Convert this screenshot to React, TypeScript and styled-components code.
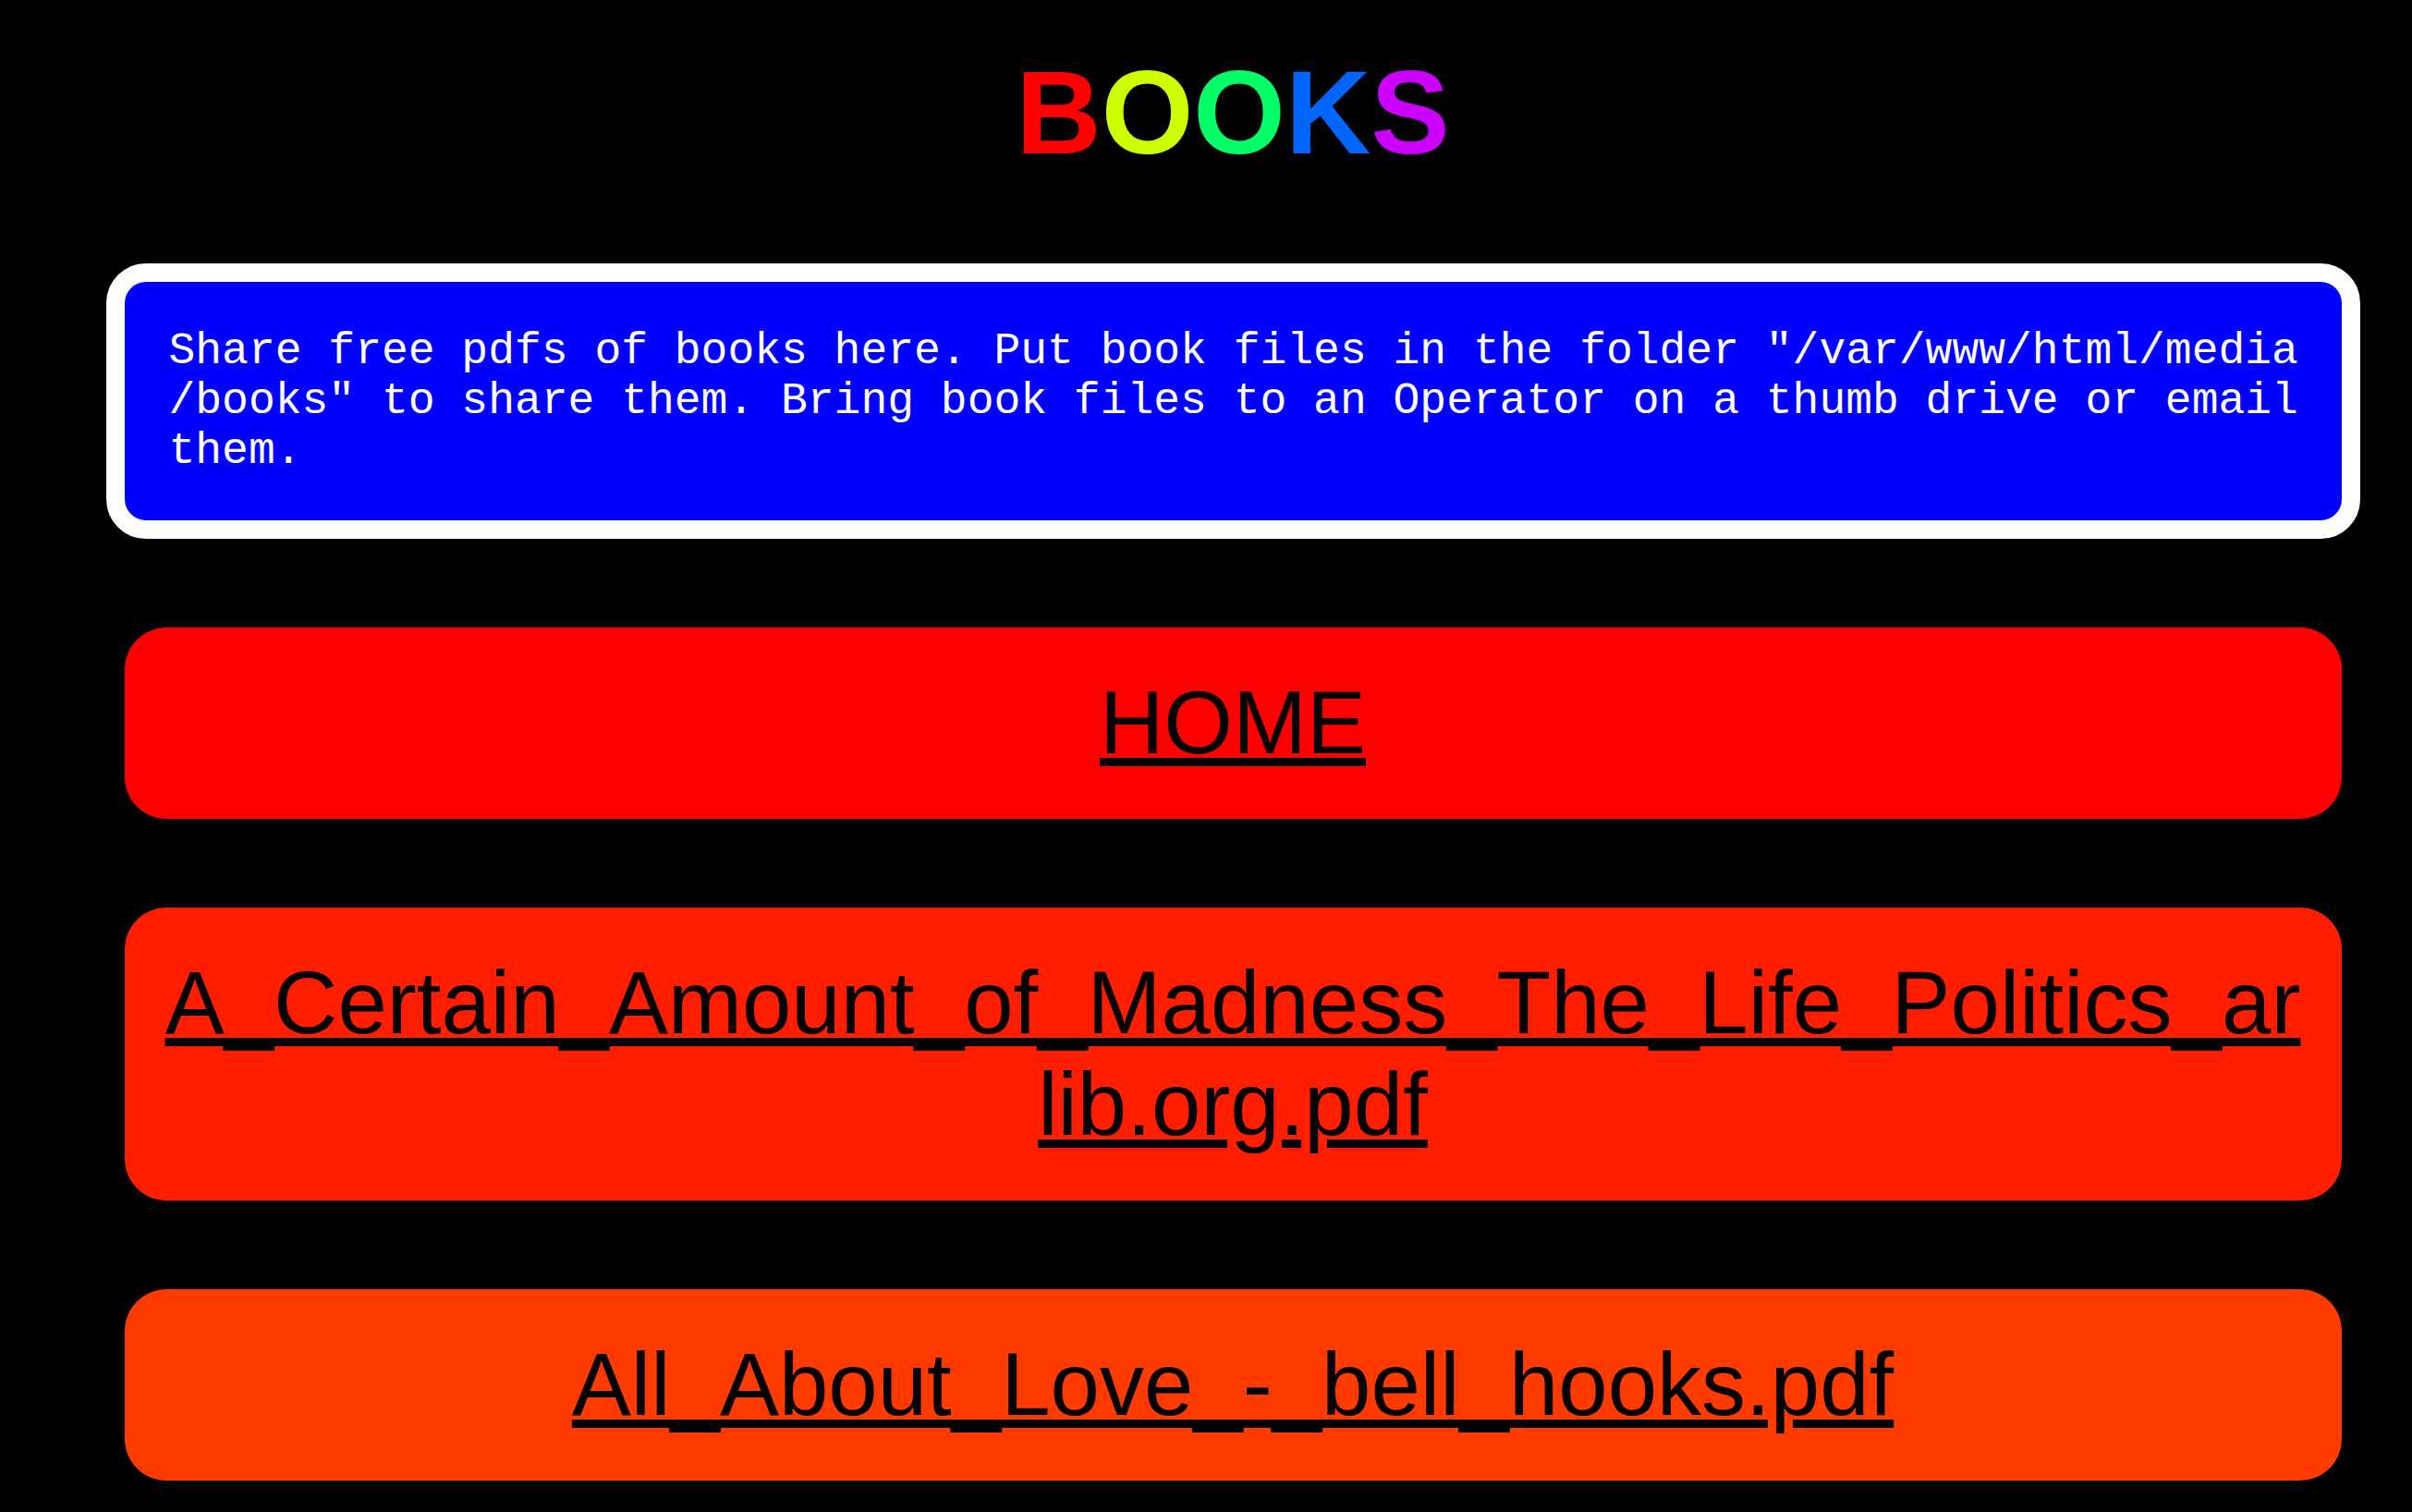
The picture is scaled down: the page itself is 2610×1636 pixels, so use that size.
import styled, { createGlobalStyle } from "styled-components";

const GlobalStyle = createGlobalStyle`
  html,
  body {
    margin: 0;
    padding: 0;
    background-color: #000;
  }
`;

const Page = styled.div`
  min-height: 100vh;
  padding: 48px 0 96px 58px;
  box-sizing: border-box;
  background-color: #000;
  display: flex;
  flex-direction: column;
  align-items: center;
`;

const Title = styled.h1`
  margin: 0 0 90px;
  font-family: "Liberation Sans", Arial, sans-serif;
  font-size: 128px;
  font-weight: 700;
  line-height: normal;
  text-align: center;
`;

const Letter = styled.span<{ $color: string }>`
  color: ${(p) => p.$color};
`;

const InfoBox = styled.div`
  width: 2399px;
  box-sizing: content-box;
  margin-bottom: 96px;
  border: 20px solid #fff;
  border-radius: 43px;
  background-color: #00f;
`;

const InfoText = styled.p`
  margin: 0;
  padding: 48px 30px 48px 48px;
  color: #fff;
  font-family: "Liberation Mono", "Courier New", monospace;
  font-size: 48px;
  line-height: normal;
  line-break: anywhere;
`;

const List = styled.div`
  width: 2399px;
  display: flex;
  flex-direction: column;
  gap: 96px;
`;

const BookButton = styled.div<{ $hue: number }>`
  padding: 48px 44px 49px;
  border-radius: 45px;
  background-color: ${(p) => `hsl(${p.$hue}, 100%, 50%)`};
  text-align: center;
  line-break: anywhere;
`;

const BookLink = styled.a`
  color: #000;
  font-family: "Liberation Sans", Arial, sans-serif;
  font-size: 96px;
  line-height: normal;
  text-decoration: underline;
`;

const title = [
  { ch: "B", color: "#ff0000" },
  { ch: "O", color: "#ccff00" },
  { ch: "O", color: "#00ff66" },
  { ch: "K", color: "#0066ff" },
  { ch: "S", color: "#cc00ff" },
];

const links = [
  { label: "HOME", href: "/" },
  {
    label: "A_Certain_Amount_of_Madness_The_Life_Politics_arlib.org.pdf",
    href: "/media/books/A_Certain_Amount_of_Madness_The_Life_Politics_arlib.org.pdf",
  },
  {
    label: "All_About_Love_-_bell_hooks.pdf",
    href: "/media/books/All_About_Love_-_bell_hooks.pdf",
  },
];

export default function App() {
  return (
    <>
      <GlobalStyle />
      <Page>
        <Title>
          {title.map((l, i) => (
            <Letter key={i} $color={l.color}>
              {l.ch}
            </Letter>
          ))}
        </Title>
        <InfoBox>
          <InfoText>
            Share free pdfs of books here. Put book files in the folder
            "/var/www/html/media/books" to share them. Bring book files to an
            Operator on a thumb drive or email them.
          </InfoText>
        </InfoBox>
        <List>
          {links.map((l, i) => (
            <BookButton key={l.label} $hue={i * 7}>
              <BookLink href={l.href}>{l.label}</BookLink>
            </BookButton>
          ))}
        </List>
      </Page>
    </>
  );
}
